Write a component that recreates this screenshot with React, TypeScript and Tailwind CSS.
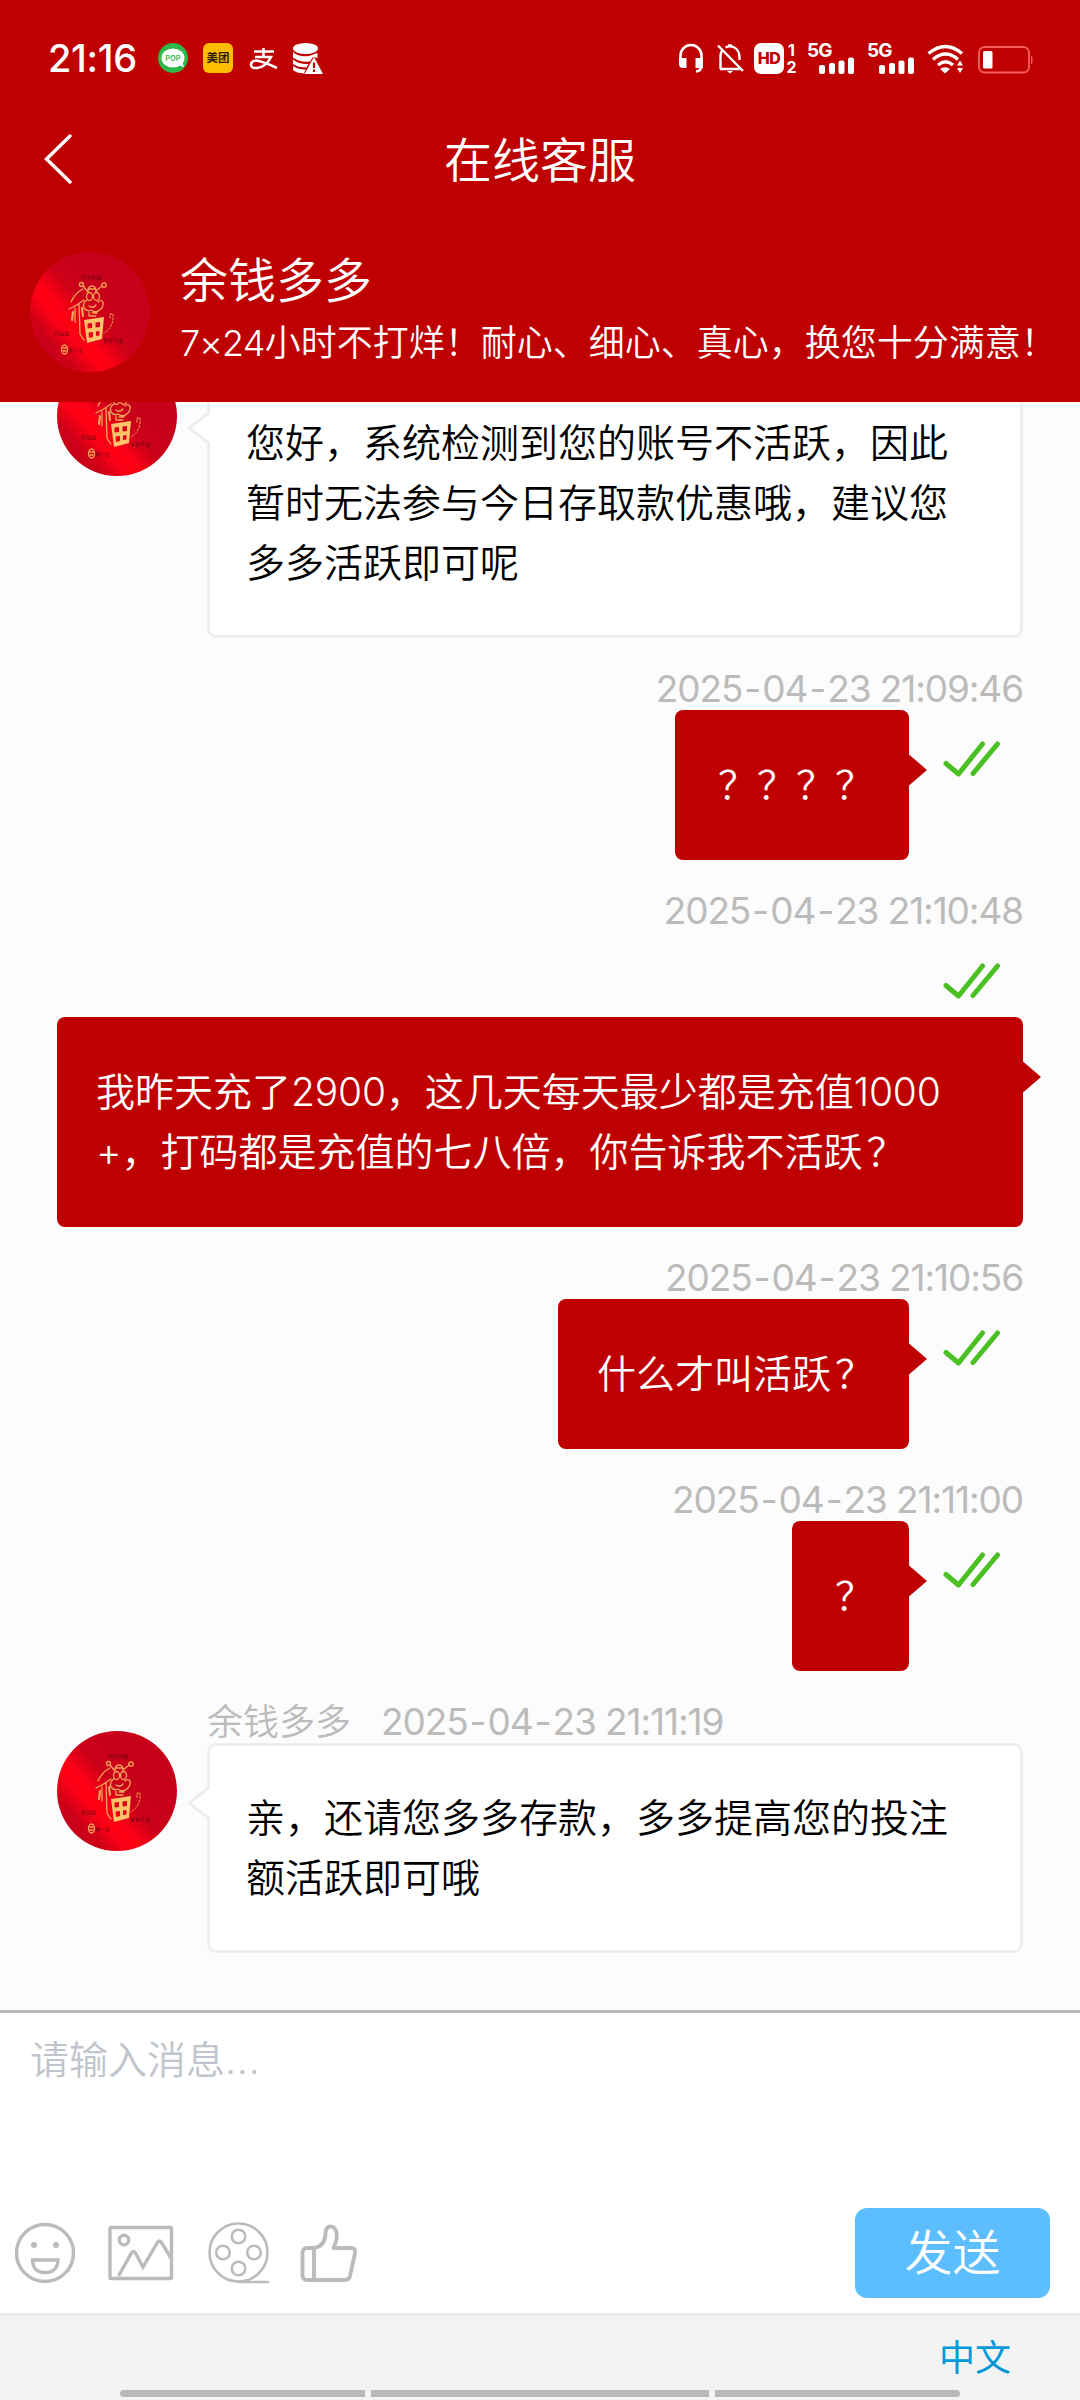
interface Message {
  id: number;
  from: 'agent' | 'me';
  time?: string;
  text: string;
  wide?: boolean;
}

const AGENT_NAME = '余钱多多';

const messages: Message[] = [
  {
    id: 1,
    from: 'agent',
    text: '您好，系统检测到您的账号不活跃，因此\n暂时无法参与今日存取款优惠哦，建议您\n多多活跃即可呢',
  },
  { id: 2, from: 'me', time: '2025-04-23 21:09:46', text: '？？？？' },
  {
    id: 3,
    from: 'me',
    time: '2025-04-23 21:10:48',
    text: '我昨天充了2900，这几天每天最少都是充值1000\n+，打码都是充值的七八倍，你告诉我不活跃？',
    wide: true,
  },
  { id: 4, from: 'me', time: '2025-04-23 21:10:56', text: '什么才叫活跃？' },
  { id: 5, from: 'me', time: '2025-04-23 21:11:00', text: '？' },
  {
    id: 6,
    from: 'agent',
    time: '2025-04-23 21:11:19',
    text: '亲，还请您多多存款，多多提高您的投注\n额活跃即可哦',
  },
];

const Avatar = () => (
  <svg viewBox="0 0 120 120" className="w-[120px] h-[120px] rounded-full shrink-0">
    <defs>
      <linearGradient id="shine" gradientUnits="userSpaceOnUse" x1="18" y1="100" x2="82" y2="44">
        <stop offset="0" stopColor="#c8001a" />
        <stop offset="0.12" stopColor="#cf0019" />
        <stop offset="0.32" stopColor="#fd0014" />
        <stop offset="0.46" stopColor="#fd0014" />
        <stop offset="0.7" stopColor="#cc0019" />
        <stop offset="1" stopColor="#c8001a" />
      </linearGradient>
    </defs>
    <rect width="120" height="120" fill="url(#shine)" />
    <g fill="#5a0a10" fontFamily="Noto Sans CJK SC, sans-serif" fontSize="5">
      <text x="51" y="27">有余有福</text>
      <text x="24" y="83">好运连</text>
      <text x="73" y="90">岁岁平安</text>
      <text x="38" y="100">多一生</text>
    </g>
    <g fill="none" stroke="#f2a558" strokeWidth="1.3" strokeLinecap="round" strokeLinejoin="round">
      <path d="M53 37Q45 41 41 50M54 48Q46 54 39 57M45 56L45 70M49 52L50 82Q52 86 54 88" />
      <path d="M43 60L42 68M52 56L53 64" strokeWidth="2.2" />
      <path d="M58 40L53 34M66 39L72 34M58 40Q58 34 62 34Q66 34 66 40M58 37H66" />
      <circle cx="51.5" cy="32.5" r="2" />
      <circle cx="74" cy="33" r="2.2" />
      <ellipse cx="59.5" cy="44.5" rx="3" ry="4" />
      <ellipse cx="66.5" cy="44.5" rx="3" ry="4" />
      <path d="M57 48Q52 51 54 56Q57 60 61 58Q66 62 71 57Q75 52 72 49Q70 48 68 50M59 54Q63 57 66 53M59 60V64M62 61H67M60 64H66" />
      <path d="M80 66V62H83V67Q82 76 74 81" strokeDasharray="2 1.6" strokeWidth="1" />
      <ellipse cx="34.5" cy="97.5" rx="3" ry="4.5" />
      <path d="M33 96H36M33 99H36" />
    </g>
    <path
      d="M54 68L74 65L72 87L57 91ZM57.5 71.5V76.5L62 76V71ZM65.5 70.5V75.5L70 75V70ZM58.5 80.5L59 86L63 85V80ZM66 79.5V84L69.5 83.5V79Z"
      fill="#ffc46b"
      fillRule="evenodd"
    />
  </svg>
);

const DoubleCheck = () => (
  <svg viewBox="0 0 60 36" className="w-[60px] h-9">
    <path
      d="M4 22.5L16.5 33L40.5 3M31 32.5L55.5 3"
      fill="none"
      stroke="#4bc022"
      strokeWidth="5"
      strokeLinecap="round"
      strokeLinejoin="round"
    />
  </svg>
);

const Signal = () => (
  <div className="relative w-[48px] h-[31px]">
    <span className="absolute left-0 -top-px text-[19px] leading-[18px] font-bold tracking-[-0.8px]">5G</span>
    <svg viewBox="0 0 48 31" className="absolute inset-0 w-[48px] h-[31px]" fill="#fff">
      <rect x="12" y="22" width="6" height="9" rx="2" />
      <rect x="22" y="20" width="6" height="11" rx="2" />
      <rect x="31.5" y="17.5" width="6" height="13.5" rx="2" />
      <rect x="41" y="14.5" width="6" height="16.5" rx="2" />
    </svg>
  </div>
);

const StatusBar = () => (
  <div className="flex h-[116px] pt-[43px] pl-12 pr-[47px]">
    <span className="w-[110px] text-[38px] leading-[31px] font-[450] tracking-[-0.3px]">21:16</span>
    <svg viewBox="0 0 30 30" className="w-[30px] h-[30px]">
      <circle cx="15" cy="15" r="15" fill="#2fb84a" />
      <ellipse cx="15" cy="15" rx="11.5" ry="9.5" fill="#fff" />
      <path d="M19 22L26 24L24 18Z" fill="#fff" />
      <text x="15" y="17.8" textAnchor="middle" fontFamily="Inter" fontWeight="600" fontSize="7.5" fill="#2fb84a">
        POP
      </text>
    </svg>
    <div className="ml-[15px] w-[30px] h-[30px] rounded-[6px] bg-[#ffbd00] text-[#2a1c00] text-[11.5px] leading-[30px] font-bold text-center">
      美团
    </div>
    <svg viewBox="0 0 30 30" className="ml-[16px] w-[30px] h-[30px]" fill="none" stroke="#fff" strokeWidth="2.6">
      <path d="M5 8.5H25M14.5 5V14M6 14H22Q17 24 8 25Q2 25.5 2 21.5Q2.5 17.5 7.5 17.5Q13 18 28 25" />
    </svg>
    <svg viewBox="0 0 31 31" className="ml-[13px] w-[31px] h-[31px]" fill="#fff">
      <ellipse cx="13.5" cy="5.5" rx="12.5" ry="5.5" />
      <path d="M1 9Q7 14.5 17 13L25.5 10V15L21 14L18 18.5Q7 19.5 1 14.5Z" />
      <path d="M1 16.5Q7 21.5 16.5 21L14.5 24.5Q6 24.5 1 21Z" />
      <path d="M1 23Q6 26.5 13.5 26.5L12 30.5Q4 30 1 27Z" />
      <path d="M22 14L31 31H12.5Z" />
      <path d="M22 19.5V25M22 26.5V29" stroke="#be0000" strokeWidth="2.2" />
    </svg>

    <svg viewBox="0 0 26 31" className="ml-auto w-[26px] h-[31px]">
      <path d="M2.5 17V12.5A10.5 10.5 0 0 1 23.5 12.5V22Q23.5 28 18 28.5" fill="none" stroke="#fff" strokeWidth="2.6" />
      <path d="M1 15H8.5V25H5Q1 25 1 21ZM17.5 15H25V25H17.5Z" fill="#fff" />
    </svg>
    <svg viewBox="0 0 28 31" className="ml-[12px] w-[28px] h-[31px]" fill="none" stroke="#fff" strokeWidth="2.4">
      <path d="M2 2.5L27 28M4 26H24M4.5 26V13Q4.5 10 6 7.5M9.5 4.5Q13 2.5 17.5 4Q23.5 7 23.5 14V17" />
      <path d="M11 28H17L14 30.5Z" fill="#fff" stroke="none" />
      <path d="M12 2.5H16" />
    </svg>
    <div className="ml-[10px] w-[30px] h-[31px] rounded-[7px] bg-white text-[#be0000] text-[16px] leading-[31px] font-extrabold text-center tracking-[-0.5px]">
      HD
    </div>
    <div className="ml-[2px] w-[11px] text-[16px] leading-[14px] font-bold text-center">
      <div>1</div>
      <div className="mt-[3px]">2</div>
    </div>
    <div className="ml-[10px] flex gap-[12px]">
      <Signal />
      <Signal />
    </div>
    <svg viewBox="0 0 37 31" className="ml-[12px] w-[37px] h-[31px]">
      <g fill="none" stroke="#fff" strokeWidth="3.2">
        <path d="M1.5 10.5Q18.5 -3.5 35 10.5" />
        <path d="M6 16.5Q18.5 5.5 31 16.5" />
        <path d="M11 22Q18.5 15.5 26 22" />
      </g>
      <path d="M13 26Q18.5 22.5 23 26L18 30.5Z" fill="#fff" />
      <path d="M30 22.5L33 17.5L36 22.5ZM30 25L33 30L36 25Z" fill="#fff" />
    </svg>
    <svg viewBox="0 0 55 31" className="ml-[14px] w-[55px] h-[31px]">
      <rect x="1" y="4" width="50" height="25.5" rx="5.5" fill="none" stroke="#f45c5c" strokeWidth="1.9" />
      <rect x="5" y="8" width="9.5" height="17.5" rx="1.5" fill="#fff" />
      <path d="M53 13Q54.5 13 54.5 15V19Q54.5 21 53 21Z" fill="#f45c5c" />
    </svg>
  </div>
);

const Header = () => (
  <header className="h-[402px] shrink-0 bg-[#be0000] text-white">
    <StatusBar />
    <div className="relative flex h-[90px] items-center justify-center">
      <svg viewBox="0 0 28 50" className="absolute left-[44px] top-[18px] w-7 h-[50px]" fill="none" stroke="#fff" strokeWidth="3.4">
        <path d="M26 2L2.5 25L26 48" strokeLinecap="round" />
      </svg>
      <h1 className="text-[48px] leading-[90px]">在线客服</h1>
    </div>
    <div className="flex pl-[30px] pt-[46px]">
      <Avatar />
      <div className="ml-[30px] whitespace-nowrap">
        <p className="mt-px text-[48px] leading-[56px]">{AGENT_NAME}</p>
        <p className="mt-[6px] text-[36px] leading-[56px]">
          <span className="tracking-[-0.8px]">7×24</span>小时不打烊！耐心、细心、真心，换您十分满意！
        </p>
      </div>
    </div>
  </header>
);

const Time = ({ value }: { value: string }) => (
  <span className="text-[37px] font-normal tracking-[-1.1px]">
    {value.split(/(-)/).map((part, i) =>
      part === '-' ? (
        <span key={i} className="mx-[2px]">
          -
        </span>
      ) : (
        part
      )
    )}
  </span>
);

// digits sit a little tighter than the Chinese text, question marks a little to the right
const MessageText = ({ text }: { text: string }) => (
  <>
    {text.split(/(\d+|？)/).map((part, i) => {
      if (part === '？') {
        return (
          <span key={i} className="relative left-[4px]">
            {part}
          </span>
        );
      }
      return /^\d+$/.test(part) ? (
        <span key={i} className="tracking-[-0.2px]">
          {part}
        </span>
      ) : (
        part
      );
    })}
  </>
);

const AgentMessage = ({ message }: { message: Message }) => (
  <div className="flex">
    <div className="pt-[30px]">
      <Avatar />
    </div>
    <div className="ml-[30px] w-[816px]">
      <div className="h-[42px] text-[36px] leading-[42px] text-[#bbb]">
        {message.time && (
          <>
            {AGENT_NAME}
            <span className="ml-[30px]">
              <Time value={message.time} />
            </span>
          </>
        )}
      </div>
      <div className="relative rounded-[9px] border-[3px] border-[#eee] bg-white px-[36px] py-[42px] text-[39px] leading-[60px] text-black whitespace-pre">
        <svg viewBox="0 0 24 34" className="absolute -left-[23px] top-[40px] w-6 h-[34px]">
          <path d="M24 2L3 17L24 32Z" fill="#fff" />
          <path d="M21.5 2L2 17L21.5 32" fill="none" stroke="#eee" strokeWidth="3" />
        </svg>
        <MessageText text={message.text} />
      </div>
    </div>
  </div>
);

const MyMessage = ({ message }: { message: Message }) => (
  <div>
    <div className="h-[42px] text-right text-[36px] leading-[42px] text-[#bbb]">
      {message.time && <Time value={message.time} />}
    </div>
    <div className={message.wide ? 'flex flex-col-reverse items-end' : 'flex items-start justify-end'}>
      <div
        className={`relative rounded-[8px] bg-[#be0000] px-[39px] py-[45px] text-[39px] leading-[60px] text-white whitespace-pre ${
          message.wide ? 'w-full' : ''
        }`}
      >
        <MessageText text={message.text} />
        <svg viewBox="0 0 18 32" className="absolute -right-[18px] top-[44px] w-[18px] h-8">
          <path d="M0 0.5L18 16L0 31.5Z" fill="#be0000" />
        </svg>
      </div>
      <div className={message.wide ? 'h-[85px] w-[81px] pt-[31px]' : 'ml-[33px] w-[81px] pt-[31px]'}>
        <DoubleCheck />
      </div>
    </div>
  </div>
);

const Toolbar = () => (
  <div className="flex items-center text-[#bbb]">
    <svg viewBox="0 0 60 62" className="w-[60px] h-[62px]" fill="none" stroke="currentColor" strokeWidth="3.4">
      <circle cx="30" cy="31" r="28.5" />
      <path d="M17.5 38H43Q42.5 50.5 30 50.5Q18 50.5 17.5 38Z" />
      <circle cx="19" cy="23" r="3" fill="currentColor" stroke="none" />
      <circle cx="41" cy="23" r="3" fill="currentColor" stroke="none" />
    </svg>
    <svg viewBox="0 0 66 62" className="ml-[33px] w-[66px] h-[62px]" fill="none" stroke="currentColor" strokeWidth="3.4">
      <rect x="2" y="5.5" width="61.5" height="51" rx="1" />
      <circle cx="16" cy="18" r="4.8" />
      <path d="M10.5 54L23.5 31Q25.5 28 27.5 31L35 45L49.5 20.5Q51.5 17.5 53.5 20.5L63.5 37" />
    </svg>
    <svg viewBox="0 0 62 64" className="ml-[34px] mt-px w-[62px] h-[64px]" fill="none" stroke="currentColor" strokeWidth="2.6">
      <circle cx="30.5" cy="31.5" r="29" />
      <circle cx="30.5" cy="15.5" r="6.8" />
      <circle cx="15" cy="31.5" r="6.8" />
      <circle cx="46" cy="31.5" r="6.8" />
      <circle cx="30.5" cy="47.5" r="6.8" />
      <path d="M30.5 61H60" strokeLinecap="round" />
    </svg>
    <svg
      viewBox="0 0 58 62"
      className="ml-[30px] w-[58px] h-[62px]"
      fill="none"
      stroke="currentColor"
      strokeWidth="3.8"
      strokeLinejoin="round"
    >
      <path d="M14 26H7Q2.5 26 2.5 31V53Q2.5 58 7 58H45Q49 58 50 54L55 31Q56 26 51 26H33.5Q38 16 36.5 10Q34 3.5 29 4.5Q26 6 25.5 11Q25.5 24 14 26ZM14 26V58" />
    </svg>
  </div>
);

const Composer = () => (
  <div className="h-[303px] shrink-0 border-t-[3px] border-[#bbb] bg-white flex flex-col">
    <p className="px-[30px] pt-[17px] text-[39px] leading-[60px] text-[#c0c4cc]">
      请输入消息<span className="tracking-[0.8px]">...</span>
    </p>
    <div className="mt-auto mb-[15px] flex items-end justify-between pl-[15px] pr-[30px]">
      <div className="mb-[13px]">
        <Toolbar />
      </div>
      <button className="h-[90px] w-[195px] rounded-[12px] bg-[#5dbeff] text-[48px] leading-[90px] text-white">
        发送
      </button>
    </div>
  </div>
);

const Footer = () => (
  <div className="relative h-[87px] shrink-0 border-t-[3px] border-[#ebebeb] bg-[#f3f3f3]">
    <p className="pr-[69px] pt-[14px] text-right text-[36px] leading-[56px] font-normal text-[#0099d8]">中文</p>
    <div className="absolute left-[120px] bottom-[3px] flex gap-[6px]">
      <div className="h-[7px] w-[245px] rounded-l-full bg-[#b9b9b9]" />
      <div className="h-[7px] w-[338px] bg-[#b9b9b9]" />
      <div className="h-[7px] w-[245px] rounded-r-full bg-[#b9b9b9]" />
    </div>
  </div>
);

const App = () => {
  return (
    <div className="flex h-[2400px] w-[1080px] flex-col overflow-hidden bg-[#fcfcfc] font-['Inter','Noto_Sans_CJK_SC',sans-serif] font-[350]">
      <Header />
      <main className="flex min-h-0 flex-1 flex-col justify-end gap-[30px] overflow-hidden px-[57px] pb-[57px]">
        {messages.map((message) =>
          message.from === 'agent' ? (
            <AgentMessage key={message.id} message={message} />
          ) : (
            <MyMessage key={message.id} message={message} />
          )
        )}
      </main>
      <Composer />
      <Footer />
    </div>
  );
};

export default App;
